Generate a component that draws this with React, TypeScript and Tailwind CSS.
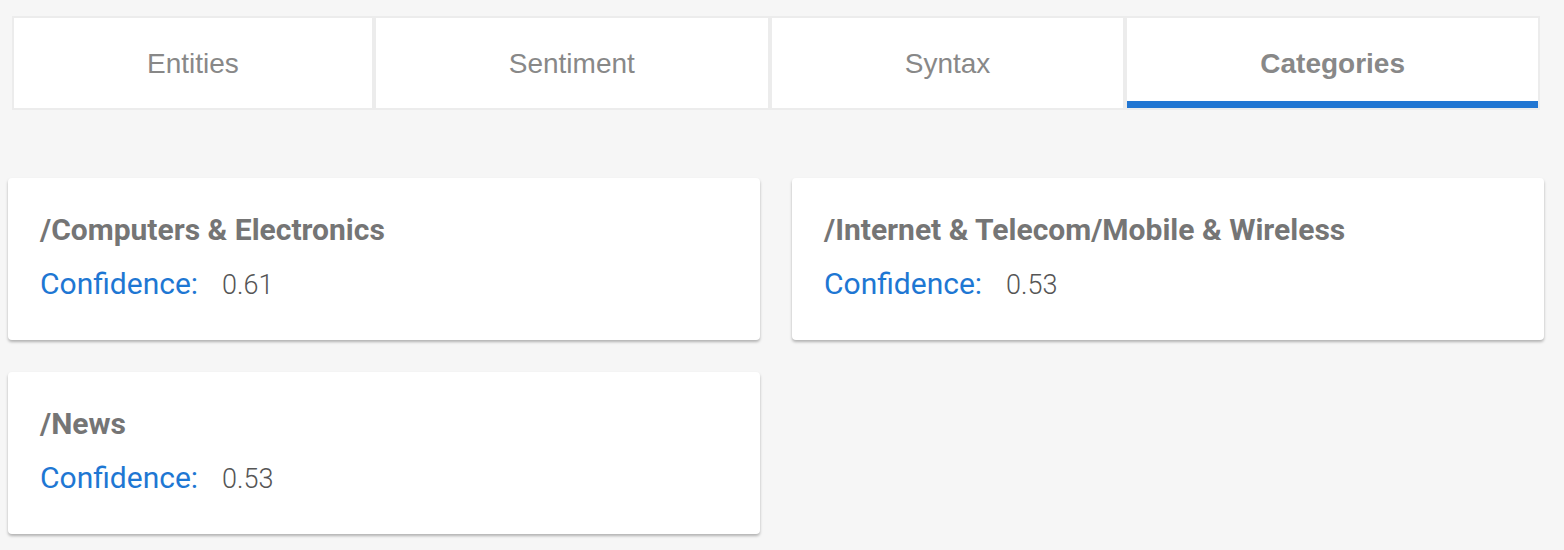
import { useState } from 'react';

const tabs = ['Entities', 'Sentiment', 'Syntax', 'Categories'];

const categories = [
  { name: '/Computers & Electronics', confidence: 0.61 },
  { name: '/Internet & Telecom/Mobile & Wireless', confidence: 0.53 },
  { name: '/News', confidence: 0.53 },
];

export default function App() {
  const [active, setActive] = useState('Categories');

  return (
    <div className="min-h-[550px] bg-[#f6f6f6] pt-4 pr-5 pl-2">
      <div className="mx-1 flex gap-1 bg-[#ececec] p-[2px] font-['Liberation_Sans',Arial,sans-serif]">
        {tabs.map((tab) => (
          <button
            key={tab}
            onClick={() => setActive(tab)}
            className={`flex h-[90px] flex-auto items-center justify-center bg-white pt-[2px] text-[28px] text-[#888] ${
              active === tab ? 'font-bold shadow-[inset_0_-7px_0_#2176d2]' : ''
            }`}
          >
            {tab}
          </button>
        ))}
      </div>

      {/* category cards */}
      <div className="mt-[68px] grid grid-cols-2 gap-8 font-['Roboto',sans-serif]">
        {categories.map((c) => (
          <div
            key={c.name}
            className="h-[162px] rounded bg-white px-8 pt-9 shadow-[0_2px_3px_rgba(0,0,0,0.28)]"
          >
            <p className="text-[30px] leading-8 font-bold text-[#757575]">{c.name}</p>
            <p className="mt-[22px] text-[30px] leading-8">
              <span className="text-[#1e77d3]">Confidence:</span>
              <span className="ml-6 text-[27px] font-light text-[#555]">{c.confidence.toFixed(2)}</span>
            </p>
          </div>
        ))}
      </div>
    </div>
  );
}
